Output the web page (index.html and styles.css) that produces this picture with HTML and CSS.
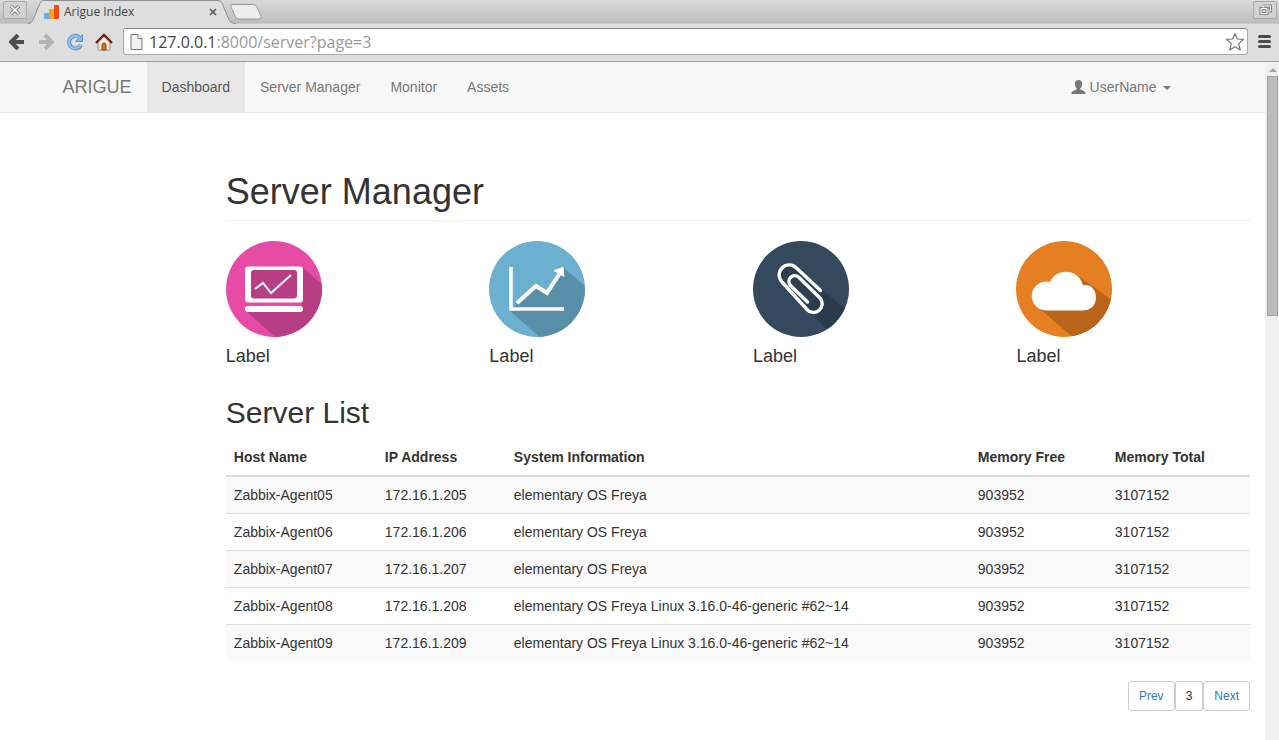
FILE: index.html
```html
<!DOCTYPE html>
<html lang="en">
<head>
<meta charset="utf-8">
<title>Arigue Index</title>
<link rel="stylesheet" href="styles.css">
</head>
<body>
<div class="browser">
  <div class="tabstrip">
    <button class="win-btn" aria-label="Close window">
      <svg width="12" height="12" viewBox="0 0 12 12"><path d="M2 2l8 8M10 2l-8 8" stroke="#858585" stroke-width="3.6"/><path d="M2.2 2.2l7.6 7.6M9.8 2.2l-7.6 7.6" stroke="#fff" stroke-width="1.6"/></svg>
    </button>
    <div class="tab">
      <svg class="tab-shape" width="208" height="24" viewBox="0 0 208 24"><path d="M0 24C3 24 4 22 5 20L12 3Q13 .5 16 .5H190Q193 .5 194 3L201 20C202 22 204 24 208 24Z" fill="#dedede"/><path d="M0 23.5C3 23.5 4 22 5 20L12 3Q13 .5 16 .5H190Q193 .5 194 3L201 20C202 22 204 23.5 208 23.5" fill="none" stroke="#8f8f8f"/></svg>
      <svg class="favicon" width="16" height="16" viewBox="0 0 16 16"><rect x="0" y="9" width="6" height="6" rx="1" fill="#5eb0e5"/><rect x="5" y="5" width="6" height="10" rx="1" fill="#fba21f"/><rect x="10" y="1" width="5" height="14" rx="1" fill="#ee4a1c"/></svg>
      <span class="tab-title">Arigue Index</span>
      <button class="tab-close" aria-label="Close tab"><svg width="8" height="8" viewBox="0 0 8 8"><path d="M1 1l6 6M7 1L1 7" stroke="#555" stroke-width="1.6"/></svg></button>
    </div>
    <button class="new-tab" aria-label="New tab"><svg width="34" height="18" viewBox="0 0 34 18"><path d="M3 1.500H24Q27 1.500 28 4L32 13Q33 16 30 16H10Q7 16 6 13L2 4Q1 1.500 3 1.500Z" fill="#eee" stroke="#999"/></svg></button>
    <button class="win-btn restore" aria-label="Restore window">
      <svg width="13" height="12" viewBox="0 0 13 12"><g fill="none"><path d="M4.500 2h7v5h-3M2 4.500h6v5H2z" stroke="#888" stroke-width="3"/><path d="M4.500 3.500V2h7v5H9M2 4.500h6v5H2z" stroke="#fff"/></g></svg>
    </button>
  </div>
  <div class="toolbar">
    <button class="tool" aria-label="Back"><svg width="16" height="16" viewBox="0 0 16 16"><path d="M9 1L2 8l7 7M3 8h12" fill="none" stroke="#4d4d4d" stroke-width="4"/></svg></button>
    <button class="tool" aria-label="Forward"><svg width="16" height="16" viewBox="0 0 16 16"><path d="M7 1l7 7-7 7M13 8H1" fill="none" stroke="#b3b3b3" stroke-width="4"/></svg></button>
    <button class="tool" aria-label="Reload"><svg width="18" height="18" viewBox="0 0 18 18"><path d="M15 12A6.300 6.300 0 1 1 13 4" fill="none" stroke="#5a8fc6" stroke-width="4"/><path d="M16.500 1.500v7h-7z" fill="#8bbbe6" stroke="#5a8fc6"/><path d="M14.500 12A6.200 6.200 0 1 1 13.500 5" fill="none" stroke="#93c0ea" stroke-width="2.300"/></svg></button>
    <button class="tool" aria-label="Home"><svg width="18" height="18" viewBox="0 0 18 18"><path d="M13 1h3v7h-3z" fill="#d9cdbd"/><path d="M3 8l6-6 6 6v9H3z" fill="#f6eadb" stroke="#a68d79"/><path d="M1 10l8-8 8 8" fill="none" stroke="#6b201e" stroke-width="2.400"/><path d="M7 17v-5q0-2 2-2t2 2v5z" fill="#c9782f" stroke="#87451c"/></svg></button>
    <div class="omnibox">
      <svg width="13" height="16" viewBox="0 0 13 16"><path d="M1 .5h7l4 4v11H1z" fill="#f2f2f2" stroke="#777"/><path d="M8 .5v4h4" fill="#fff" stroke="#777"/></svg>
      <div class="url">127.0.0.1<span class="url-path">:8000/server?page=3</span></div>
      <button class="star" aria-label="Bookmark"><svg width="20" height="20" viewBox="0 0 20 20"><path d="M10 1.500L12.300 7l6.200.4-4.800 4.200 1.600 6.400L10 14.700 4.700 18l1.600-6.400L1.500 7.400 7.700 7z" fill="#fff" stroke="#777" stroke-width="1.200" stroke-linejoin="round"/></svg></button>
    </div>
    <button class="menu" aria-label="Menu"><svg width="13" height="13" viewBox="0 0 13 13"><path d="M1.500 1.500h10M1.500 6.500h10M1.500 11.500h10" stroke="#4a4a4a" stroke-width="3" stroke-linecap="round"/></svg></button>
  </div>
</div>
<div class="viewport">
  <div class="page">
    <nav class="navbar">
      <div class="container">
        <a class="brand" href="#">ARIGUE</a>
        <a class="nav-link active" href="#">Dashboard</a>
        <a class="nav-link" href="#">Server Manager</a>
        <a class="nav-link" href="#">Monitor</a>
        <a class="nav-link" href="#">Assets</a>
        <a class="nav-link user" href="#"><svg width="15" height="14" viewBox="0 0 15 14"><path d="M7.500 0C10 0 11.300 1.500 11.100 4c-.1 2-.7 3.300-1.800 4.300v1c.5 1 5.200 1.600 5.200 3.700v1H.5v-1c0-2.100 4.700-2.700 5.200-3.700v-1C4.600 7.300 4 6 3.900 4 3.700 1.500 5 0 7.500 0z" fill="#777"/></svg>UserName<span class="caret"></span></a>
      </div>
    </nav>
    <main class="main">
      <h1>Server Manager</h1>
      <div class="tiles">
        <div class="tile">
          <svg width="96" height="96" viewBox="0 0 96 96"><clipPath id="disc"><circle cx="48" cy="48" r="48"/></clipPath><g clip-path="url(#disc)"><path d="M0 0h96v96H0z" fill="#e64ca6"/><path d="M76 26l28 24v54H58L20 70l2-8h50z" fill="#b73d85"/></g><path d="M19 60h57v6H19z" fill="#e64ca6"/><path d="M22 25.500h52q3 0 3 3v30q0 3-3 3H22q-3 0-3-3v-30q0-3 3-3z" fill="#fff"/><rect x="25" y="29" width="46" height="28.500" rx="3" fill="#b73d85"/><rect x="19" y="65" width="58" height="6" rx="3" fill="#fff"/><path d="M29 48l8-6 8 10 20-18" fill="none" stroke="#fff" stroke-width="2"/></svg>
          <h4>Label</h4>
        </div>
        <div class="tile">
          <svg width="96" height="96" viewBox="0 0 96 96"><g clip-path="url(#disc)"><path d="M0 0h96v96H0z" fill="#6cb0cf"/><path d="M75 27l29 25v52H60L21 70l7-7 19-17 11 7z" fill="#588fa8"/></g><path d="M22 26v42h53" fill="none" stroke="#fff" stroke-width="3.500"/><path d="M28 62l19-17 11 7 13-20" fill="none" stroke="#fff" stroke-width="4"/><path d="M74 26.500l1 9-10-6z" fill="#fff" stroke="#fff" stroke-linejoin="round"/></svg>
          <h4>Label</h4>
        </div>
        <div class="tile">
          <svg width="96" height="96" viewBox="0 0 96 96"><g clip-path="url(#disc)"><path d="M0 0h96v96H0z" fill="#34495e"/><path d="M68 48l36 29v27H90L55 69z" fill="#2b3b4c"/></g><path d="M67.500 49.500L43.500 27A10 10 0 0 0 29 41L54 68.500A8.500 8.500 0 0 0 67 57L45.500 36A5.900 5.900 0 0 0 37 44L54.500 61" fill="#2b3b4c" fill-opacity=".7" stroke="#fff" stroke-width="3.400" stroke-linecap="round" stroke-linejoin="round"/></svg>
          <h4>Label</h4>
        </div>
        <div class="tile">
          <svg width="96" height="96" viewBox="0 0 96 96"><g clip-path="url(#disc)"><path d="M0 0h96v96H0z" fill="#e67e22"/><path d="M62 35l42 30v39H66L24 68z" fill="#b8651b"/></g><path d="M30 69.500A14.500 14.500 0 1 1 34 41C40 27 62 27 67 44C76 43 80 50 80 56C80 65 74 69.500 67 69.500z" fill="#fff"/></svg>
          <h4>Label</h4>
        </div>
      </div>
      <h2>Server List</h2>
      <table class="servers">
        <colgroup><col class="c-host"><col class="c-ip"><col class="c-info"><col class="c-free"><col></colgroup>
        <thead><tr><th>Host Name</th><th>IP Address</th><th>System Information</th><th>Memory Free</th><th>Memory Total</th></tr></thead>
        <tbody>
          <tr><td>Zabbix-Agent05</td><td>172.16.1.205</td><td>elementary OS Freya</td><td>903952</td><td>3107152</td></tr>
          <tr><td>Zabbix-Agent06</td><td>172.16.1.206</td><td>elementary OS Freya</td><td>903952</td><td>3107152</td></tr>
          <tr><td>Zabbix-Agent07</td><td>172.16.1.207</td><td>elementary OS Freya</td><td>903952</td><td>3107152</td></tr>
          <tr><td>Zabbix-Agent08</td><td>172.16.1.208</td><td>elementary OS Freya Linux 3.16.0-46-generic #62~14</td><td>903952</td><td>3107152</td></tr>
          <tr><td>Zabbix-Agent09</td><td>172.16.1.209</td><td>elementary OS Freya Linux 3.16.0-46-generic #62~14</td><td>903952</td><td>3107152</td></tr>
        </tbody>
      </table>
      <div class="pager"><a href="#">Prev</a><span>3</span><a href="#">Next</a></div>
    </main>
  </div>
  <div class="scrollbar"><svg width="8" height="4" viewBox="0 0 8 4"><path d="M0 4l4-4 4 4z" fill="#a3a3a3"/></svg><div class="thumb"></div></div>
</div>
</body>
</html>
```
FILE: styles.css
```css
* { box-sizing: border-box; }
body {
  margin: 0;
  min-height: 100vh;
  display: flex;
  flex-direction: column;
  background: #fff;
  color: #333;
  font: 14px/20px "Liberation Sans", Arial, sans-serif;
}
button { padding: 0; border: 0; background: none; display: flex; align-items: center; justify-content: center; }
svg { display: block; flex: none; }
a { color: #337ab7; text-decoration: none; }

.browser { font-family: "Open Sans", sans-serif; }
.tabstrip {
  display: flex;
  height: 24px;
  padding: 0 2px 0 3px;
  background: linear-gradient(#dadada, #bdbdbd);
  border-bottom: 1px solid #c9c9c9;
}
.win-btn { width: 24px; height: 18px; margin-top: 1px; border: 1px solid #aaa; border-radius: 2px; background: #d2d2d2; }
.restore { margin-left: auto; }
.tab { position: relative; display: flex; align-items: center; width: 208px; height: 24px; margin-left: 1px; padding: 0 19px 0 16px; }
.tab-shape { position: absolute; left: 0; top: 0; }
.tab .favicon, .tab-title, .tab-close { position: relative; }
.tab-title { flex: 1; padding-left: 4px; font-size: 12px; line-height: 16px; color: #444; }
.new-tab { align-self: flex-start; margin-top: 3px; margin-left: -7px; position: relative; }
.toolbar {
  display: flex;
  align-items: center;
  height: 38px;
  padding: 0 7px 2px 8px;
  background: #dedede;
  border-bottom: 1px solid #a0a0a0;
}
.tool { width: 18px; height: 28px; margin-right: 11px; }
.tool:nth-child(4) { margin-right: 10px; }
.omnibox {
  flex: 1;
  display: flex;
  align-items: center;
  height: 27px;
  padding: 0 2px 0 6px;
  background: #fff;
  border: 1px solid #aaa;
  border-top-color: #888;
  border-radius: 3px;
}
.url { flex: 1; padding-left: 6px; font-size: 16px; line-height: 24px; color: #444; }
.url-path { color: #999; }
.menu { width: 16px; height: 28px; margin-left: 8px; }

.viewport { flex: 1; display: flex; }
.page { flex: 1; min-width: 0; }
.scrollbar { width: 14px; padding: 6px 1px 0 2px; background: #f0f0f0; display: flex; flex-direction: column; align-items: center; }
.thumb { width: 100%; height: 240px; margin-top: 4px; background: #bababa; border: 1px solid #a3a3a3; }

.navbar { background: #f8f8f8; border-bottom: 1px solid #e7e7e7; }
.container { display: flex; max-width: 1170px; margin: 0 auto; padding: 0 32px 0 15px; }
.brand { padding: 15px 15px 15px 0; font-size: 18px; color: #777; }
.nav-link { padding: 15px; color: #777; }
.nav-link.active { background: #e7e7e7; color: #555; }
.user { display: flex; align-items: center; margin-left: auto; }
.user svg { margin-right: 4px; }
.caret { margin: 2px 0 0 6px; border: 4px solid transparent; border-top-color: #777; border-bottom: 0; }

.main { margin-left: 16.6667%; padding: 59px 15px 28px; }
h1, h2, h4 { margin: 0; font-weight: 400; }
h1 { padding-bottom: 9px; border-bottom: 1px solid #eee; font-size: 36px; line-height: 39px; }
.tiles { display: grid; grid-template-columns: repeat(4, 1fr); margin: 20px -15px 0; }
.tile { padding: 0 15px; }
h4 { margin-top: 9px; font-size: 18px; line-height: 20px; }
h2 { margin: 30px 0 9px; font-size: 30px; line-height: 34px; }
.servers { width: 100%; table-layout: fixed; border-collapse: collapse; }
.servers th, .servers td { padding: 8px; text-align: left; }
.servers th { border-bottom: 2px solid #ddd; }
.servers td { border-top: 1px solid #ddd; }
.servers tbody tr:nth-child(odd) { background: #f9f9f9; }
.c-host { width: 151px; }
.c-ip { width: 129px; }
.c-info { width: 464px; }
.c-free { width: 137px; }
.pager { display: flex; justify-content: flex-end; margin-top: 20px; font-size: 12px; line-height: 18px; }
.pager > * { padding: 5px 10px; border: 1px solid #ccc; border-radius: 3px; }
```
